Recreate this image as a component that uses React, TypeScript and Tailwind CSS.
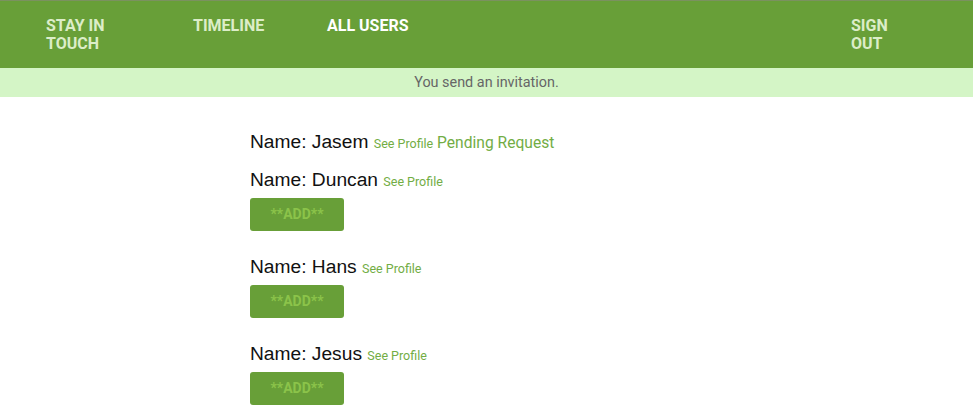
import React from 'react';

const users = [
  { name: 'Jasem', pending: true },
  { name: 'Duncan', pending: false },
  { name: 'Hans', pending: false },
  { name: 'Jesus', pending: false },
];

export default function App() {
  return (
    <div className="min-h-screen bg-white font-['Roboto',sans-serif]">
      <header className="h-[68px] bg-[#689f38] border-t border-[#7b9160]">
        <nav className="flex items-start pt-[16px] text-[16px] font-bold leading-[18px] uppercase">
          <a className="ml-[46px] w-[147px] text-[#dcedc8]">
            <span className="block w-[80px]">Stay in touch</span>
          </a>
          <a className="w-[134px] text-[#dcedc8]">Timeline</a>
          <a className="text-white">All users</a>
          <a className="ml-auto mr-[80px] w-[42px] text-[#dcedc8]">Sign out</a>
        </nav>
      </header>

      {/* Flash notice */}
      <div className="h-[29px] bg-[#d4f5c6] flex items-center justify-center text-[14.4px] text-[#666]">
        You send an invitation.
      </div>

      <main className="pl-[250px] pt-[33px]">
        {users.map((u) => (
          <div key={u.name} className={u.pending ? 'mb-[14px]' : 'mb-[24px]'}>
            <p className="h-[24px] leading-[24px] text-[19.2px] text-[#111] font-['Liberation_Sans',Arial,sans-serif]">
              Name: {u.name}{' '}
              <a className="text-[12.5px] text-[#72ad45] font-['Roboto',sans-serif]">See Profile</a>
              {u.pending && (
                <span className="text-[15.6px] text-[#72ad45] font-['Roboto',sans-serif]"> Pending Request</span>
              )}
            </p>
            {!u.pending && (
              <button className="mt-[6px] w-[94px] h-[33px] rounded-[3px] bg-[#689f38] text-[14px] font-bold text-[#8bc34a]">
                **ADD**
              </button>
            )}
          </div>
        ))}
      </main>
    </div>
  );
}
